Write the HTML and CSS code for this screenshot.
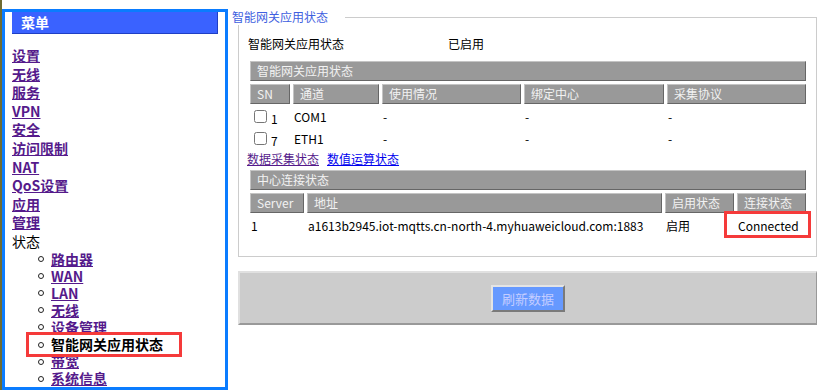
FILE: index.html
```html
<!DOCTYPE html>
<html lang="zh-CN">
<head>
<meta charset="utf-8">
<title>智能网关应用状态</title>
<link rel="stylesheet" href="styles.css">
</head>
<body>
<div class="page">
  <nav class="menu">
    <div class="menu-title">菜单</div>
    <ul class="menu-list">
      <li><a href="#">设置</a></li>
      <li><a href="#">无线</a></li>
      <li><a href="#">服务</a></li>
      <li><a href="#">VPN</a></li>
      <li><a href="#">安全</a></li>
      <li><a href="#">访问限制</a></li>
      <li><a href="#">NAT</a></li>
      <li><a href="#">QoS设置</a></li>
      <li><a href="#">应用</a></li>
      <li><a href="#">管理</a></li>
      <li><span class="plain">状态</span>
        <ul class="sub">
          <li><a href="#">路由器</a></li>
          <li><a href="#">WAN</a></li>
          <li><a href="#">LAN</a></li>
          <li><a href="#">无线</a></li>
          <li><a href="#">设备管理</a></li>
          <li class="current">智能网关应用状态</li>
          <li><a href="#">带宽</a></li>
          <li><a href="#">系统信息</a></li>
        </ul>
      </li>
    </ul>
  </nav>
  <main class="content">
    <fieldset class="box">
      <legend>智能网关应用状态</legend>
      <div class="kv"><span class="k">智能网关应用状态</span><span>已启用</span></div>
      <div class="grid g1">
        <div class="bar">智能网关应用状态</div>
        <div class="th">SN</div>
        <div class="th">通道</div>
        <div class="th">使用情况</div>
        <div class="th">绑定中心</div>
        <div class="th">采集协议</div>
        <div class="td"><input type="checkbox"><span class="sn">1</span></div>
        <div class="td">COM1</div>
        <div class="td">-</div>
        <div class="td">-</div>
        <div class="td">-</div>
        <div class="td"><input type="checkbox"><span class="sn">7</span></div>
        <div class="td">ETH1</div>
        <div class="td">-</div>
        <div class="td">-</div>
        <div class="td">-</div>
      </div>
      <div class="links"><a href="#" class="visited">数据采集状态</a><a href="#" class="fresh">数值运算状态</a></div>
      <div class="grid g2">
        <div class="bar">中心连接状态</div>
        <div class="th">Server</div>
        <div class="th">地址</div>
        <div class="th">启用状态</div>
        <div class="th">连接状态</div>
        <div class="td">1</div>
        <div class="td">a1613b2945.iot-mqtts.cn-north-4.myhuaweicloud.com:1883</div>
        <div class="td">启用</div>
        <div class="td">Connected</div>
      </div>
    </fieldset>
    <div class="actions"><button type="button" class="btn">刷新数据</button></div>
  </main>
  <div class="mark mark-menu"></div>
  <div class="mark mark-conn"></div>
</div>
</body>
</html>
```

FILE: styles.css
```css
html, body {
  margin: 0;
  padding: 0;
  background: #ffffff;
}
body {
  font-family: "Noto Sans CJK SC", "Noto Sans", sans-serif;
  font-size: 12px;
  color: #000;
}
.page {
  position: relative;
  display: flex;
  align-items: flex-start;
  height: 390px;
  border-left: 2px solid #6e6b33;
  box-sizing: border-box;
  overflow: hidden;
}

/* ---------- left menu ---------- */
.menu {
  flex: none;
  box-sizing: border-box;
  width: 226px;
  height: 381px;
  margin-top: 9px;
  border: 3px solid #0a7cff;
  overflow: hidden;
}
.menu-title {
  margin: 0 7px;
  height: 22px;
  box-sizing: border-box;
  background: #3a62ff;
  border-right: 1px solid #1f3fc4;
  border-bottom: 1px solid #1f3fc4;
  color: #fff;
  font-weight: bold;
  font-size: 14px;
  line-height: 21px;
  padding-left: 9px;
}
.menu-list {
  list-style: none;
  margin: 12px 0 0 0;
  padding: 0 0 0 7px;
  font-size: 14px;
  font-weight: bold;
  line-height: 18.6px;
}
.menu-list a {
  color: #551a8b;
  text-decoration: underline;
}
.plain {
  color: #000;
  font-weight: normal;
}
.sub {
  list-style: none;
  margin: 0;
  padding: 0 0 0 26px;
}
.sub li {
  display: flex;
  align-items: center;
  line-height: 17.1px;
}
.sub li::before {
  content: "";
  flex: none;
  width: 4px;
  height: 4px;
  border: 1.5px solid #222;
  border-radius: 50%;
  margin-right: 7px;
}
.sub .current {
  color: #000;
}

/* ---------- content ---------- */
.content {
  flex: none;
  width: 579px;
  margin-left: 10px;
}
.box {
  margin: 9px 0 0 0;
  padding: 11px 10px 21px 11px;
  border: 1px solid #cccccc;
  min-width: 0;
}
.box legend {
  margin-left: -18px;
  padding: 0 17px 0 0;
  background: #fff;
  color: #4060e0;
  font-size: 12px;
  line-height: 16px;
}
.kv {
  display: flex;
  margin-left: -2px;
  line-height: 16px;
  margin-bottom: 9px;
}
.kv .k {
  width: 200px;
}
.grid {
  display: grid;
  gap: 3px;
}
.g1 {
  grid-template-columns: 40px 86px 139px 140px 1fr;
  grid-auto-rows: 19px;
  grid-template-rows: 20px 20px;
}
.g2 {
  grid-template-columns: 54px 1fr 69px 69px;
  grid-template-rows: 20px 20px;
  grid-auto-rows: 19px;
}
.bar {
  grid-column: 1 / -1;
}
.bar, .th {
  box-sizing: border-box;
  background: #999999;
  border-top: 1px solid #c4c4c4;
  border-left: 1px solid #c4c4c4;
  border-right: 1px solid #666666;
  border-bottom: 1px solid #666666;
  color: #f2f2f2;
  padding-left: 6px;
  line-height: 18px;
  white-space: nowrap;
  overflow: hidden;
}
.td {
  display: flex;
  align-items: center;
  padding: 0 1px;
  white-space: nowrap;
}
.td input {
  margin: 0 4px 0 3px;
  width: 13px;
  height: 13px;
}
.sn {
  position: relative;
  top: 2px;
}
.links {
  display: flex;
  gap: 8px;
  margin: 3px 0 3px -3px;
  line-height: 16px;
}
.links a {
  text-decoration: underline;
}
.links .visited {
  color: #551a8b;
}
.links .fresh {
  color: #0000ee;
}
.actions {
  margin-top: 14px;
  box-sizing: border-box;
  height: 54px;
  background: #cccccc;
  border-top: 2px solid #e0e0e0;
  border-left: 2px solid #e0e0e0;
  border-right: 1px solid #999999;
  border-bottom: 2px solid #999999;
  display: flex;
  align-items: center;
  justify-content: center;
}
.btn {
  box-sizing: border-box;
  width: 74px;
  height: 27px;
  background: #6699ff;
  color: #c4cdff;
  font-family: "Noto Sans CJK SC", "Noto Sans", sans-serif;
  font-size: 13px;
  border-top: 2px solid #e4e4e4;
  border-left: 2px solid #e4e4e4;
  border-right: 2px solid #7a7a7a;
  border-bottom: 2px solid #7a7a7a;
  padding: 0;
}

/* ---------- annotation marks ---------- */
.mark {
  position: absolute;
  box-sizing: border-box;
  border: 3px solid #f53a3a;
}
.mark-menu {
  left: 24px;
  top: 332px;
  width: 156px;
  height: 25px;
}
.mark-conn {
  left: 722px;
  top: 211px;
  width: 87px;
  height: 27px;
}
```
